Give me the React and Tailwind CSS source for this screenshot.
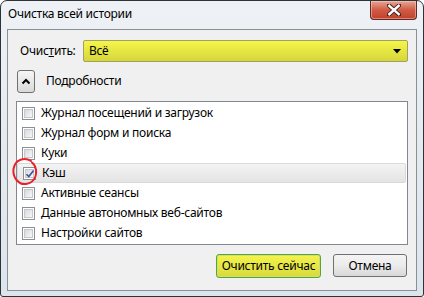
import React from "react";

const items = [
  "Журнал посещений и загрузок",
  "Журнал форм и поиска",
  "Куки",
  "Кэш",
  "Активные сеансы",
  "Данные автономных веб-сайтов",
  "Настройки сайтов",
];

const CheckBox = ({ checked }) => (
  <span className="relative flex h-[13px] w-[13px] shrink-0 items-center justify-center border border-[#8e8f8f] bg-white">
    <span className="h-[9px] w-[9px] border border-[#c4c8ce] bg-gradient-to-br from-[#d6d9de] to-[#f7f7f7]" />
    {checked && (
      <svg className="absolute left-[1px] top-[1px]" width="10" height="10" viewBox="0 0 10 10">
        <path d="M1.5 5.2 L3.8 7.6 L8.6 1.6" fill="none" stroke="#3c5196" strokeWidth="1.6" />
      </svg>
    )}
  </span>
);

export default function App() {
  return (
    <div
      className="relative h-[297px] w-[424px] overflow-hidden bg-white tracking-[-0.25px]"
      style={{ fontFamily: "'Noto Sans', 'Liberation Sans', sans-serif" }}
    >
      <div className="flex h-[297px] w-[424px] flex-col rounded-t-[7px] rounded-b-[3px] border border-[#2e3338] bg-gradient-to-b from-[#eef2f6] via-[#e4eaf0] to-[#dde5ec]">
        {/* title bar */}
        <div className="flex h-[28px] shrink-0 items-start justify-between">
          <span className="pl-[7px] pt-[5px] text-[12px] leading-[16px] text-black">Очистка всей истории</span>
          <div className="mr-[6px] flex h-[19px] w-[47px] items-center justify-center rounded-b-[4px] border border-t-0 border-[#5b2c25] bg-gradient-to-b from-[#e8a595] via-[#cf5a44] to-[#c3402a] shadow-[inset_0_0_0_1px_rgba(255,220,210,0.45)]">
            <svg width="14" height="12" viewBox="0 0 14 12">
              <path d="M2 1.5 L12 10.5 M12 1.5 L2 10.5" stroke="#3b1d18" strokeWidth="4.2" strokeLinecap="square" />
              <path d="M2.3 1.8 L11.7 10.2 M11.7 1.8 L2.3 10.2" stroke="#ffffff" strokeWidth="2.4" strokeLinecap="square" />
            </svg>
          </div>
        </div>

        {/* client area */}
        <div className="mx-[6px] flex h-[262px] flex-col border border-[#8a9097] bg-[#f0f0f0] px-[8px] text-[12px] leading-[16px] text-black">
          <div className="mt-[10px] flex h-[22px] items-center">
            <span className="ml-[4px] w-[63px]">
              Очис<span className="underline">т</span>ить:
            </span>
            <div className="flex h-[22px] flex-1 items-center justify-between rounded-[2px] border border-[#9fa06a] bg-gradient-to-b from-[#f5f54a] to-[#d6d63a] pl-[5px] pr-[6px]">
              <span>Всё</span>
              <svg width="8" height="5" viewBox="0 0 8 5">
                <path d="M0 0 H8 L4 4.5 Z" fill="#000" />
              </svg>
            </div>
          </div>

          <div className="mt-[7px] flex h-[24px] items-center">
            <div className="ml-[1px] flex h-[23px] w-[18px] items-center justify-center rounded-[3px] border border-[#707070] bg-gradient-to-b from-[#f6f6f6] to-[#d9d9d9]">
              <svg width="10" height="7" viewBox="0 0 10 7">
                <path d="M1.5 5.5 L5 2 L8.5 5.5" fill="none" stroke="#000" strokeWidth="2" />
              </svg>
            </div>
            <span className="ml-[11px]">Подробности</span>
          </div>

          <div className="mt-[8px] flex h-[144px] flex-col border border-[#828790] bg-white pt-[1px]">
            {items.map((t, i) => (
              <div
                key={t}
                className={
                  "flex h-[20px] shrink-0 items-center pl-[5px] " +
                  (i === 3
                    ? "mr-[1px] rounded-[2px] border border-[#d9d9d9] bg-gradient-to-b from-[#f3f3f3] to-[#e4e4e4] pl-[4px]"
                    : "")
                }
              >
                <CheckBox checked={i === 3} />
                <span className="ml-[6px] whitespace-nowrap">{t}</span>
              </div>
            ))}
          </div>

          <div className="mt-[9px] flex justify-end gap-[12px] pr-[1px]">
            <div className="flex h-[24px] w-[105px] items-center justify-center rounded-[3px] border border-[#5fa52d] bg-gradient-to-b from-[#f4f44c] to-[#d9d93c] shadow-[inset_0_0_0_1px_#c7e07a]">
              Очистить сейчас
            </div>
            <div className="flex h-[23px] w-[74px] items-center justify-center rounded-[3px] border border-[#707070] bg-gradient-to-b from-[#f4f4f4] via-[#ebebeb] to-[#d8d8d8]">
              Отмена
            </div>
          </div>
        </div>
      </div>

      {/* red hand-drawn circle */}
      <svg className="pointer-events-none absolute left-[11px] top-[157px]" width="28" height="30" viewBox="0 0 28 30">
        <path
          d="M20 4 C 14 0, 4 2, 2.5 12 C 1.5 21, 8 28, 15 27 C 22 26, 26 20, 25 13 C 24.5 9, 23 7, 21 5.5"
          fill="none"
          stroke="#e8222a"
          strokeWidth="2"
          strokeLinecap="round"
        />
      </svg>
    </div>
  );
}
